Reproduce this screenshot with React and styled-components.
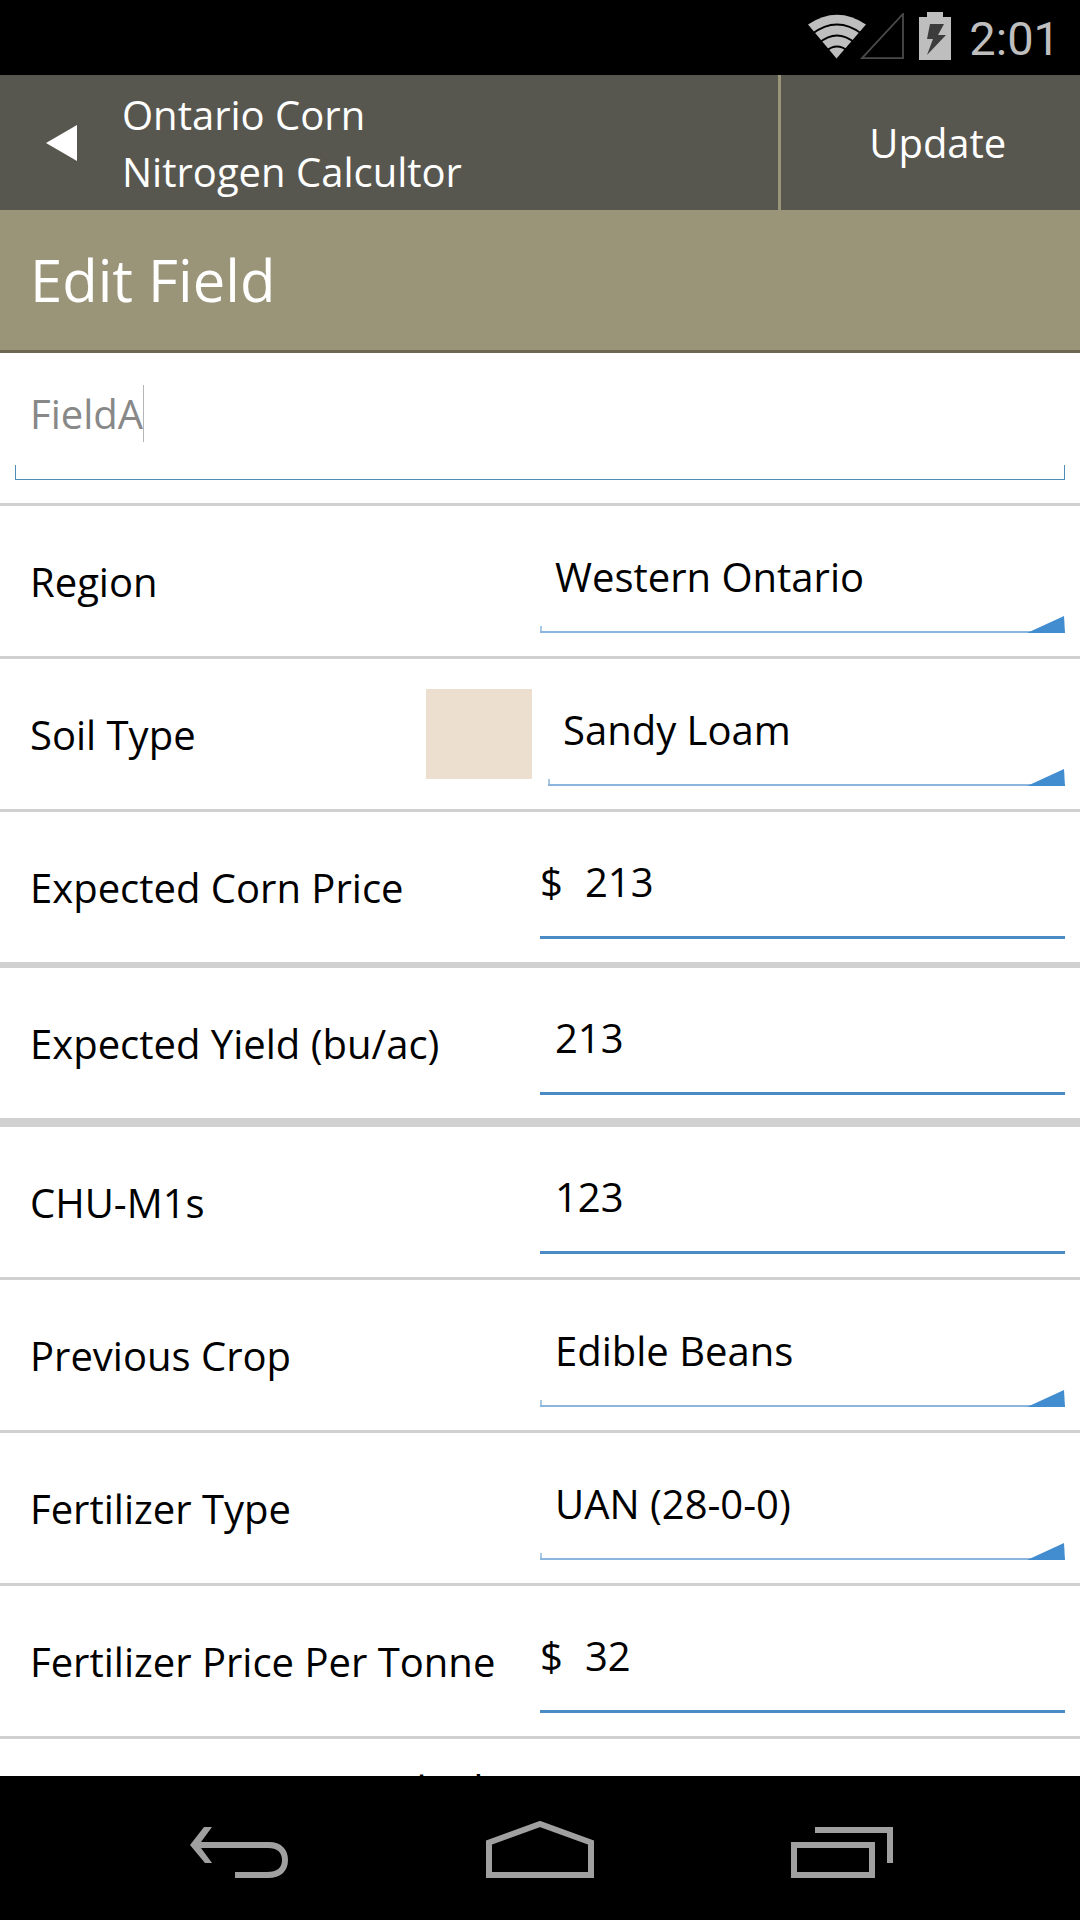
import React from 'react'
import styled, { createGlobalStyle } from 'styled-components'

const fields = [
  { id: 'region', label: 'Region', type: 'select', value: 'Western Ontario' },
  { id: 'soil', label: 'Soil Type', type: 'select', value: 'Sandy Loam', swatch: '#ecdfcf' },
  { id: 'cornPrice', label: 'Expected Corn Price', type: 'text', value: '213', prefix: '$', line: 6 },
  { id: 'yield', label: 'Expected Yield (bu/ac)', type: 'text', value: '213', line: 9 },
  { id: 'chu', label: 'CHU-M1s', type: 'text', value: '123' },
  { id: 'crop', label: 'Previous Crop', type: 'select', value: 'Edible Beans' },
  { id: 'fertilizer', label: 'Fertilizer Type', type: 'select', value: 'UAN (28-0-0)' },
  { id: 'fertPrice', label: 'Fertilizer Price Per Tonne', type: 'text', value: '32', prefix: '$' },
]

function Field({ id, label, type, value, prefix, swatch, line }) {
  return (
    <Row $line={line}>
      <Label htmlFor={id}>{label}</Label>
      {swatch && <Swatch $color={swatch} />}
      {type === 'select' ? (
        <SelectBox $narrow={!!swatch}>
          <Select id={id} defaultValue={value}>
            <option>{value}</option>
          </Select>
          <Corner viewBox="0 0 38 17">
            <path d="M0 17 L37 0 L38 17 Z" fill="#428dcf" />
          </Corner>
        </SelectBox>
      ) : (
        <TextBox>
          {prefix && <Prefix>{prefix}</Prefix>}
          <TextInput id={id} type="text" inputMode="numeric" defaultValue={value} />
        </TextBox>
      )}
    </Row>
  )
}

function App() {
  return (
    <Screen>
      <GlobalStyle />
      <StatusBar>
        <svg width="124" height="49" viewBox="807 13 124 49">
          <path d="M808 24.500 Q837 5 866 24.500 L836.500 58.500 Z" fill="#bebebe" />
          <path d="M812 34 Q837 15 862 34 M819 43 Q837 28 855 43 M826 51 Q837 42 848 51" fill="none" stroke="#000" strokeWidth="2" />
          <path d="M862 58.200 L903 14 V58.200 Z" fill="none" stroke="#4a4a4a" strokeWidth="1.800" />
        </svg>
        <Battery width="32" height="48" viewBox="0 0 32 48">
          <path d="M8 0 H24 V5 H32 V48 H0 V5 H8 Z" fill="#bebebe" />
          <path d="M11 12 H25 L19 23 H27 L8 43 L14 27 H8 Z" fill="#3c3c3c" />
        </Battery>
        <Clock>2:01</Clock>
      </StatusBar>

      <AppBar>
        <BackButton aria-label="Back">
          <svg width="31" height="36" viewBox="0 0 31 36">
            <path d="M0 18 L31 0 V36 Z" fill="#fff" />
          </svg>
        </BackButton>
        <AppName>Ontario Corn<br />Nitrogen Calcultor</AppName>
        <UpdateButton>Update</UpdateButton>
      </AppBar>

      <TitleBar>
        <h1>Edit Field</h1>
      </TitleBar>

      <Form>
        <Row>
          <NameBox>
            <NameInput type="text" aria-label="Field name" defaultValue="FieldA" />
            <Caret />
          </NameBox>
        </Row>
        {fields.map(field => <Field key={field.id} {...field} />)}
        <Row>
          <Label as="span">Starter Nitrogen Applied</Label>
        </Row>
      </Form>

      <NavBar>
        <NavButton aria-label="Back">
          <svg width="100" height="57" viewBox="-2 0 100 57">
            <path d="M14 6 H22 L11 21 H79 C91 21 98 28 98 39 C98 50 91 57 78 57 H45 V51 H77 C87 51 92 47 92 39 C92 31 87 27 78 27 H11 L22 42 H15 L0 24 Z" fill="#a0a0a0" />
          </svg>
        </NavButton>
        <NavButton aria-label="Home">
          <svg width="108" height="57" viewBox="0 0 108 57">
            <path d="M3 54 V21.500 L54 3 L105 21.500 V54 Z" fill="none" stroke="#a0a0a0" strokeWidth="6" />
          </svg>
        </NavButton>
        <NavButton aria-label="Recent apps">
          <svg width="102" height="57" viewBox="0 0 102 57">
            <path d="M3 24 H81 V54 H3 Z M24 9 H99 V42" fill="none" stroke="#a0a0a0" strokeWidth="6" />
          </svg>
        </NavButton>
      </NavBar>
    </Screen>
  )
}

export default App

const GlobalStyle = createGlobalStyle`
*{
  box-sizing:border-box;
}
body{
  margin:0;
  background:#fff;
  color:#000;
  font-family:"Open Sans", "Noto Sans", sans-serif;
  font-size:40px;
}
button, input, select{
  font:inherit;
  color:inherit;
  border:0;
  padding:0;
  background:none;
  outline:none;
}
svg{
  display:block;
}
`
const Screen = styled.div`
  display:flex;
  flex-direction:column;
  height:100vh;
`
const StatusBar = styled.header`
  display:flex;
  flex:none;
  align-items:center;
  justify-content:flex-end;
  height:75px;
  padding-right:20px;
  background:#000;
`
const Battery = styled.svg`
  margin:0 18px 3px -12px;
`
const Clock = styled.time`
  padding-top:2px;
  color:#bebebe;
  font-family:Roboto, sans-serif;
  font-size:47px;
  line-height:75px;
`
const AppBar = styled.div`
  display:flex;
  flex:none;
  align-items:stretch;
  height:135px;
  background:#58574f;
  color:#fff;
`
const BackButton = styled.button`
  display:flex;
  align-items:center;
  padding:0 45px 0 46px;
`
const AppName = styled.div`
  flex:1;
  align-self:center;
  line-height:57px;
`
const UpdateButton = styled.button`
  width:28%;
  padding-left:15px;
  border-left:3px solid #9a9579;
`
const TitleBar = styled.div`
  flex:none;
  padding:0 30px;
  background:#9a9579;
  border-bottom:3px solid #6b6751;
  color:#fff;

  h1{
    margin:0;
    font-size:58px;
    font-weight:400;
    line-height:140px;
  }
`
const Form = styled.form`
  flex:1;
  min-height:0;
  overflow:hidden;
`
const Row = styled.div`
  display:flex;
  align-items:center;
  padding:15px 15px 23px;
  border-bottom:${props => props.$line || 3}px solid #d1d1d1;
`
const Label = styled.label`
  flex:1;
  padding:8px 0 0 15px;
  white-space:nowrap;
`
const Swatch = styled.div`
  width:106px;
  height:90px;
  margin:8px 16px 0 0;
  background:${props => props.$color};
`
const TextBox = styled.div`
  display:flex;
  align-items:center;
  width:50%;
  height:112px;
  border-bottom:3px solid #4a8bc6;
`
const Prefix = styled.span`
  width:30px;
`
const TextInput = styled.input`
  flex:1;
  min-width:0;
  height:100%;
  padding:0 15px;
`
const SelectBox = styled.div`
  position:relative;
  width:${props => props.$narrow ? 'calc(50% - 8px)' : '50%'};
  height:112px;
`
const Select = styled.select`
  appearance:none;
  width:100%;
  height:100%;
  padding:0 15px;
  border-bottom:2px solid #8bb5dc;
  background:linear-gradient(#a9c8e4, #a9c8e4) left bottom / 2px 5px no-repeat;
`
const Corner = styled.svg`
  position:absolute;
  right:0;
  bottom:0;
  width:38px;
  height:17px;
  pointer-events:none;
`
const NameBox = styled.div`
  display:flex;
  align-items:center;
  width:100%;
  height:112px;
  padding:0 15px 22px;
  background:
    linear-gradient(#4f8db5, #4f8db5) left bottom / 1px 15px no-repeat,
    linear-gradient(#4f8db5, #4f8db5) right bottom / 1px 15px no-repeat,
    linear-gradient(#4f8db5, #4f8db5) left bottom / 100% 1px no-repeat;
`
const NameInput = styled.input`
  field-sizing:content;
  color:#888;
`
const Caret = styled.span`
  width:1px;
  height:57px;
  background:#b5b5b5;
`
const NavBar = styled.nav`
  display:flex;
  flex:none;
  align-items:center;
  justify-content:center;
  height:144px;
  padding-top:3px;
  background:#000;
`
const NavButton = styled.button`
  display:flex;
  justify-content:center;
  width:28%;
`
